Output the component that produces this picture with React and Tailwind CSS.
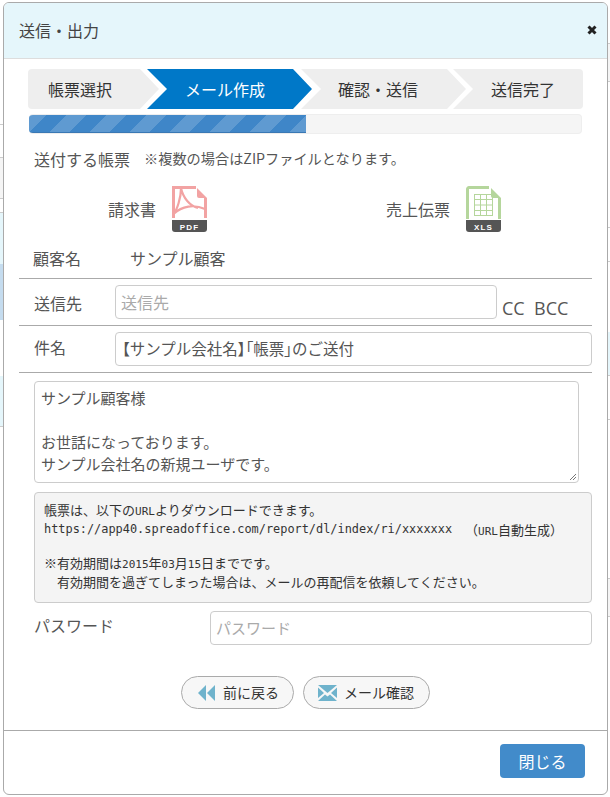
import React from "react";

const jp = { fontFamily: '"Noto Sans CJK JP", "Liberation Sans", sans-serif' };
const mono = { fontFamily: '"DejaVu Sans Mono", monospace' };

function Step({ label, active, first, last, className }) {
  const clip = first
    ? "polygon(0 0, calc(100% - 19px) 0, 100% 50%, calc(100% - 19px) 100%, 0 100%)"
    : last
    ? "polygon(0 0, 100% 0, 100% 100%, 0 100%, 20px 50%)"
    : "polygon(0 0, calc(100% - 19px) 0, 100% 50%, calc(100% - 19px) 100%, 0 100%, 20px 50%)";
  return (
    <div
      className={`h-10 shrink-0 flex items-center justify-center text-[16px] ${active ? "bg-[#0078c8] text-white" : "bg-[#eeeeee] text-[#333333]"} ${className}`}
      style={{ clipPath: clip }}
    >
      {label}
    </div>
  );
}

function FileIcon({ kind }) {
  const c = kind === "PDF" ? "#f2a3a3" : "#b5d69c";
  return (
    <svg width="35" height="46" viewBox="0 0 35 46" className="block">
      {kind === "PDF" ? (
        <g fill="none" stroke={c}>
          <path d="M1.5 32V1.5H24M33.5 12V32" strokeWidth="3" />
          <path d="M9 2C9 12 5 24 1.5 28C10 20 22 18 33 23M9 2C11 12 18 20 26 22" strokeWidth="2.2" />
        </g>
      ) : (
        <g fill="none" stroke={c}>
          <path d="M1.5 33V3a1.5 1.5 0 0 1 1.5-1.5H23M33.5 12V33" strokeWidth="3" />
          <g strokeWidth="1">
            <rect x="8.5" y="8.5" width="18" height="21" />
            <path d="M14.5 8.5V29.5M20.5 8.5V29.5M8.5 13.5H26.5M8.5 19H26.5M8.5 24.5H26.5" />
          </g>
        </g>
      )}
      <path d="M25 2L35 12H27a2 2 0 0 1-2-2Z" fill={c} />
      <path d="M0 34H35V43a3 3 0 0 1-3 3H3a3 3 0 0 1-3-3Z" fill="#555555" />
      <text x="17.5" y="43.5" textAnchor="middle" fontSize="8" fontWeight="700" fill="#ffffff" letterSpacing="1.2" fontFamily="Liberation Sans, sans-serif">{kind}</text>
    </svg>
  );
}

const Line = () => <div className="h-px bg-[#aaaaaa] ml-[15px] mr-[15px]" />;
const Palt = ({ children }) => <span className="[font-feature-settings:'palt']">{children}</span>;

export default function App() {
  return (
    <div className="w-[610px] h-[797px] bg-white flex overflow-hidden" style={jp}>
      <div className="w-[3px] shrink-0 flex flex-col">
        <div className="h-[125px] border-b border-[#cccccc]" />
        <div className="h-[33px] border-b border-[#cccccc]" />
        <div className="h-[41px] bg-[#f5f5f5] border-b border-[#cccccc]" />
        <div className="h-[14px] border-b border-[#cccccc]" />
        <div className="h-[51px] bg-[#e5f6fb]" />
        <div className="h-[56px] bg-[#c5dcef]" />
        <div className="h-[56px]" />
        <div className="h-[51px] bg-[#e5f6fb] border-b border-[#cccccc]" />
      </div>

      <div className="w-[605px] h-[793px] mt-[2px] shrink-0 border border-[#aaaaaa] rounded-md overflow-hidden flex flex-col text-[#555555] bg-white">
        <div className="h-[56px] shrink-0 bg-[#e5f6fb] border-b border-[#dddddd] flex items-center justify-between pl-[15px] pr-[10px] pb-[1px] text-[16px] text-[#444444]">
          <span>送信・出力</span>
          <svg width="10" height="10" viewBox="0 0 10 10"><path d="M1.5 1.5L8.5 8.5M8.5 1.5L1.5 8.5" stroke="#222222" strokeWidth="3" /></svg>
        </div>

        <div className="flex-1 flex flex-col">
          <div className="flex mt-[10px] ml-[24px] w-[555px] rounded overflow-hidden">
            <Step first label="帳票選択" className="w-[131px] pr-[27px]" />
            <Step active label="メール作成" className="w-[165px] -ml-[12px] pr-[9px]" />
            <Step label="確認・送信" className="w-[165px] -ml-[11px] pr-[11px]" />
            <Step last label="送信完了" className="w-[130px] -ml-[13px] pl-[10px]" />
          </div>
          <div className="mt-[5px] ml-[25px] w-[553px] h-5 bg-[#f5f5f5] border-y border-r border-[#eeeeee] rounded overflow-hidden">
            <div
              className="h-full w-[277px] border-b border-[#3a78b4]"
              style={{ backgroundColor: "#3f86c8", backgroundImage: "linear-gradient(45deg, transparent 25%, rgba(255,255,255,.17) 25%, rgba(255,255,255,.17) 50%, transparent 50%, transparent 75%, rgba(255,255,255,.17) 75%)", backgroundSize: "40px 40px", transform: "scaleX(-1)" }}
            />
          </div>

          <div className="mt-[13px] ml-[30px] h-6 flex items-center">
            <span className="text-[16px]">送付する帳票</span>
            <span className="ml-[14px] text-[14.2px]">※複数の場合はZIPファイルとなります。</span>
          </div>

          <div className="flex mt-[17px] h-[46px] ml-[104px]">
            <div className="flex items-center text-[16px] pb-[4px]">
              <span className="w-[48px] whitespace-nowrap">請求書</span>
              <div className="ml-[16px]"><FileIcon kind="PDF" /></div>
            </div>
            <div className="ml-[179px] flex items-center text-[16px] pb-[4px]">
              <span className="w-[64px] whitespace-nowrap">売上伝票</span>
              <div className="ml-[16px]"><FileIcon kind="XLS" /></div>
            </div>
          </div>

          <div className="flex mt-[10px] h-[30px] pb-[2px] items-center ml-[29px] text-[16px]">
            <span className="w-[97px]">顧客名</span>
            <span>サンプル顧客</span>
          </div>

          <div className="mt-[4px]"><Line /></div>

          <div className="flex items-start h-[46px] pt-[6px] ml-[30px]">
            <span className="w-[81px] pt-[6px] text-[16px]">送信先</span>
            <div className="w-[382px] h-[34px] border border-[#cccccc] rounded flex items-center px-[5px] text-[16px] text-[#aaaaaa]">送信先</div>
            <span className="ml-[5px] mt-[11px] text-[18px] leading-[24px] whitespace-nowrap" style={{ fontFamily: '"Open Sans", sans-serif' }}>CC&nbsp;&nbsp;BCC</span>
          </div>
          <Line />
          <div className="flex items-start h-[46px] pt-[6px] ml-[30px]">
            <span className="w-[81px] pt-[3px] text-[16px]">件名</span>
            <div className="w-[477px] h-[34px] border border-[#cccccc] rounded flex items-center pl-[6px] text-[15.5px] whitespace-nowrap">
              <span><Palt>【</Palt>サンプル会社名<Palt>】「</Palt>帳票<Palt>」</Palt>のご送付</span>
            </div>
          </div>
          <Line />

          <div className="relative ml-[30px] mt-[8px] w-[545px] h-[102px] border border-[#cccccc] rounded px-[6px] pt-[5px] text-[15px] leading-[22px]">
            <div>サンプル顧客様</div>
            <div className="h-[22px]" />
            <div>お世話になっております。</div>
            <div>サンプル会社名の新規ユーザです。</div>
            <svg className="absolute right-[1px] bottom-[1px]" width="8" height="8" viewBox="0 0 8 8"><path d="M1 7L7 1M4 7L7 4" stroke="#777777" strokeWidth="1" /></svg>
          </div>

          <div className="ml-[30px] mt-[9px] w-[558px] h-[111px] bg-[#f4f4f4] border border-[#cccccc] rounded pl-[9px] pt-[7px] text-[13px] leading-[19px] text-[#333333]">
            <div className="h-[19px]">帳票は、以下の<span className="text-[11px]" style={mono}>URL</span>よりダウンロードできます。</div>
            <div className="h-[19px] pt-[1px] flex whitespace-nowrap">
              <span className="text-[11.9px]" style={mono}>https://app40.spreadoffice.com/report/dl/index/ri/xxxxxxx</span>
              <span className="ml-[13px]">（<span className="text-[11px]" style={mono}>URL</span>自動生成）</span>
            </div>
            <div className="h-[15px]" />
            <div className="h-[19px]">※有効期間は<span className="text-[11px]" style={mono}>2015</span>年<span className="text-[11px]" style={mono}>03</span>月<span className="text-[11px]" style={mono}>15</span>日までです。</div>
            <div className="h-[19px] pl-[13px]">有効期間を過ぎてしまった場合は、メールの再配信を依頼してください。</div>
          </div>

          <div className="flex items-start ml-[30px] mt-[8px]">
            <span className="w-[176px] text-[16px] leading-[28px]">パスワード</span>
            <div className="w-[382px] h-[34px] border border-[#cccccc] rounded flex items-center px-[5px] text-[15px] text-[#aaaaaa]">パスワード</div>
          </div>

          <div className="flex justify-center gap-[9px] mt-[31px] text-[14px] text-[#333333] pr-[1px]">
            <div className="w-[113px] h-[33px] rounded-full border border-[#aaaaaa] bg-[#f7f7f7] flex items-center justify-center gap-[8px] pl-[3px]">
              <svg width="17" height="16" viewBox="0 0 17 16"><path d="M8 0V16L0 8ZM17 0V16L9 8Z" fill="#6fb3cc" /></svg>
              前に戻る
            </div>
            <div className="w-[127px] h-[33px] rounded-full border border-[#aaaaaa] bg-[#f7f7f7] flex items-center justify-center gap-[7px]">
              <svg width="19" height="16" viewBox="0 0 19 16"><path d="M0 0H19L9.5 8ZM0 2.5L6 8L0 13ZM19 2.5L13 8L19 13ZM0 16L7 9.5L9.5 11.5L12 9.5L19 16Z" fill="#6fb3cc" /></svg>
              メール確認
            </div>
          </div>
        </div>

        <div className="h-[64px] shrink-0 border-t border-[#aaaaaa] flex items-start justify-end pt-[13px] pr-[22px]">
          <div className="w-[85px] h-[34px] rounded bg-[#428bca] text-white text-[16px] flex items-center justify-center">閉じる</div>
        </div>
      </div>

      <div className="w-[2px] shrink-0 flex flex-col">
        <div className="h-[44px] border-b border-[#cccccc]" />
        <div className="h-[38px] bg-[#f5f5f5] border-b border-[#cccccc]" />
        <div className="h-[146px] border-b border-[#cccccc]" />
        <div className="h-[34px] border-b border-[#cccccc]" />
        <div className="h-[70px]" />
        <div className="h-[44px] bg-[#e5f6fb] border-b border-[#cccccc]" />
        <div className="h-[44px] border-b border-[#cccccc]" />
        <div className="h-[159px] border-b border-[#cccccc]" />
        <div className="h-[38px] bg-[#f5f5f5] border-b border-[#cccccc]" />
      </div>
    </div>
  );
}
